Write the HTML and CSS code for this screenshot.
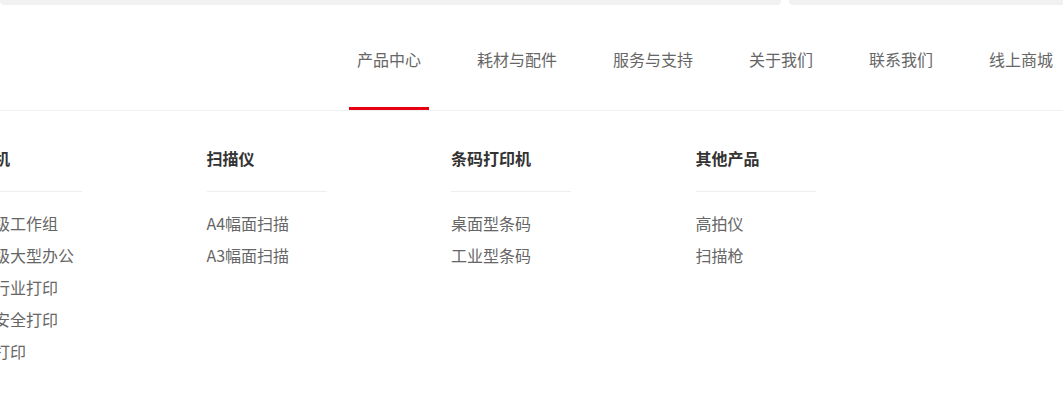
FILE: index.html
```html
<!DOCTYPE html>
<html lang="zh-CN">
<head>
<meta charset="utf-8">
<title>产品中心</title>
<link rel="stylesheet" href="styles.css">
</head>
<body>
<div class="topbar">
  <div class="topbar-seg topbar-left"></div>
  <div class="topbar-seg topbar-right"></div>
</div>
<header class="header">
  <nav class="nav">
    <a class="nav-item active">产品中心</a>
    <a class="nav-item">耗材与配件</a>
    <a class="nav-item">服务与支持</a>
    <a class="nav-item">关于我们</a>
    <a class="nav-item">联系我们</a>
    <a class="nav-item">线上商城</a>
  </nav>
</header>
<section class="dropdown">
  <div class="col">
    <h3 class="col-title">打印机</h3>
    <ul class="col-list">
      <li>部门级工作组</li>
      <li>企业级大型办公</li>
      <li>金融行业打印</li>
      <li>信息安全打印</li>
      <li>彩色打印</li>
    </ul>
  </div>
  <div class="col">
    <h3 class="col-title">扫描仪</h3>
    <ul class="col-list">
      <li>A4幅面扫描</li>
      <li>A3幅面扫描</li>
    </ul>
  </div>
  <div class="col">
    <h3 class="col-title">条码打印机</h3>
    <ul class="col-list">
      <li>桌面型条码</li>
      <li>工业型条码</li>
    </ul>
  </div>
  <div class="col">
    <h3 class="col-title">其他产品</h3>
    <ul class="col-list">
      <li>高拍仪</li>
      <li>扫描枪</li>
    </ul>
  </div>
</section>
</body>
</html>
```
FILE: styles.css
```css
* {
  box-sizing: border-box;
}
html, body {
  margin: 0;
  padding: 0;
  background: #fff;
  overflow: hidden;
}
body {
  width: 1063px;
  height: 405px;
  font-family: "Microsoft YaHei", "Noto Sans CJK SC", "Noto Sans", sans-serif;
  color: #666;
}
.topbar {
  display: flex;
  gap: 8px;
  height: 5px;
}
.topbar-seg {
  height: 5px;
  background: #f1f1f1;
  border-radius: 0 0 4px 4px;
}
.topbar-left {
  width: 781px;
}
.topbar-right {
  flex: 1;
  margin-right: -10px;
}
.header {
  border-bottom: 1px solid #f2f2f2;
}
.nav {
  display: flex;
  justify-content: flex-end;
  gap: 40px;
  padding-right: 2px;
}
.nav-item {
  display: block;
  padding: 42px 8px 36px;
  font-size: 16px;
  line-height: 24px;
  color: #666;
  border-bottom: 3px solid transparent;
  white-space: nowrap;
}
.nav-item.active {
  border-bottom-color: #e60012;
}
.dropdown {
  display: flex;
  margin-left: -38px;
  padding-top: 35px;
}
.col {
  width: 244.5px;
  flex: none;
}
.col-title {
  margin: 0;
  width: 120px;
  padding-bottom: 21px;
  border-bottom: 1px solid #eee;
  font-size: 16px;
  line-height: 24px;
  font-weight: bold;
  color: #333;
  white-space: nowrap;
}
.col-list {
  list-style: none;
  margin: 15px 0 0;
  padding: 0;
}
.col-list li {
  font-size: 16px;
  line-height: 32px;
  color: #666;
  white-space: nowrap;
}
```
